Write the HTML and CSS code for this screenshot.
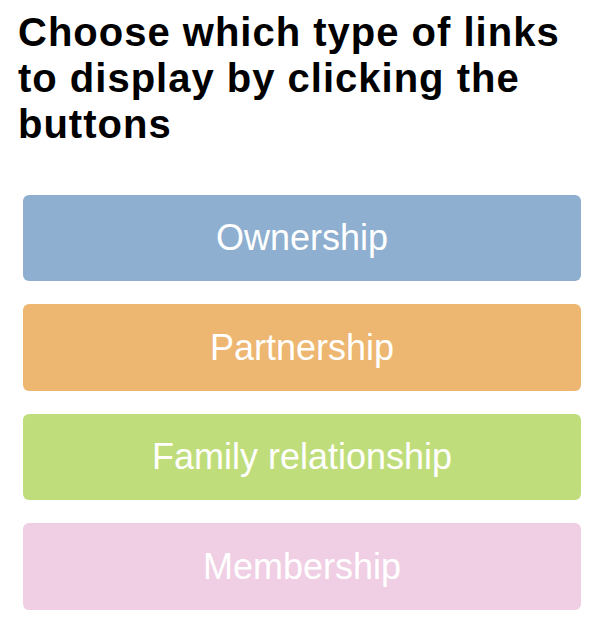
FILE: index.html
```html
<!DOCTYPE html>
<html lang="en">
	<head>
		<meta charset="UTF-8" />
		<meta name="viewport" content="width=device-width, initial-scale=1.0" />
		<title>Link types</title>
		<link rel="stylesheet" href="styles.css">
	</head>
	<body>
		<div class="panel">
			<h1 class="title">Choose which type of links to display by clicking the buttons</h1>

			<div class="links">
				<button class="link-type ownership">Ownership</button>
				<button class="link-type partnership">Partnership</button>
				<button class="link-type family">Family relationship</button>
				<button class="link-type membership">Membership</button>
			</div>
		</div>
	</body>
</html>
```

FILE: styles.css
```css
body {
	margin: 0;
	font-family: "Liberation Sans", Arial, Helvetica, sans-serif;
	background: #fff;
}

.panel {
	padding: 9px 18px;
}

.title {
	margin: 0;
	font-size: 40px;
	line-height: 46px;
	font-weight: 700;
	letter-spacing: 1px;
	color: #000;
}

.links {
	display: flex;
	flex-direction: column;
	gap: 23.3px;
	width: 558px;
	margin: 48px 0 0 5px;
}

.link-type {
	display: flex;
	align-items: center;
	justify-content: center;
	height: 86.2px;
	padding: 0;
	border: none;
	border-radius: 6px;
	color: #fff;
	font-family: inherit;
	font-size: 36px;
	cursor: pointer;
}

.ownership {
	background-color: #8eafcf;
}

.partnership {
	background-color: #edb671;
}

.family {
	background-color: #bfdd7b;
}

.membership {
	background-color: #f0cfe4;
}
```
